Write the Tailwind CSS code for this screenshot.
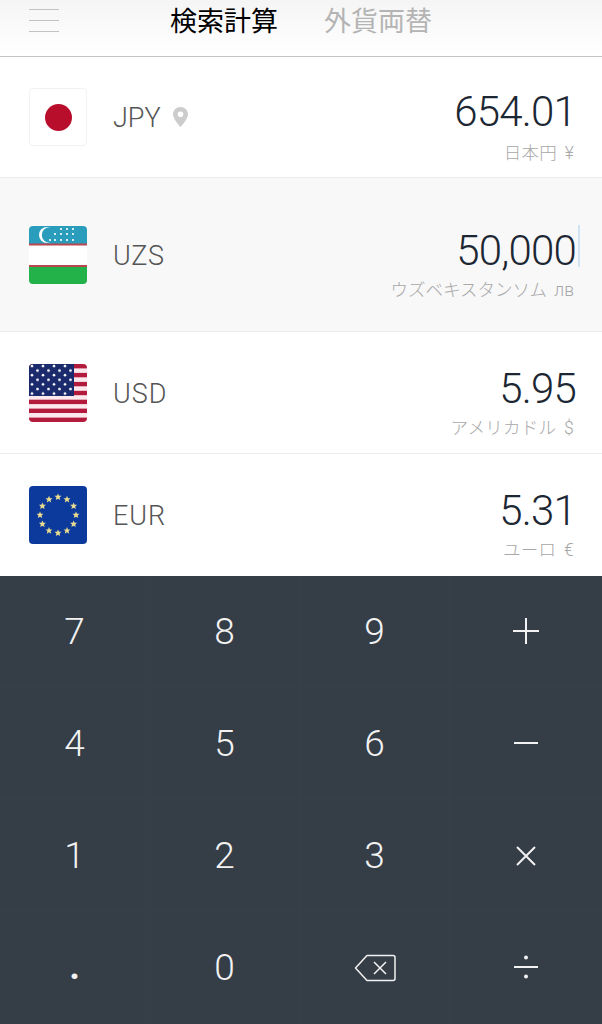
<!DOCTYPE html>
<html lang="ja">
<head>
    <meta charset="utf-8">
    <title>検索計算</title>
    <script src="https://cdn.jsdelivr.net/npm/@tailwindcss/browser@4"></script>
</head>
<body class="w-[602px] h-[1024px] overflow-hidden bg-white font-['Roboto','Noto_Sans_CJK_JP',sans-serif]">

<!-- header -->
<header class="flex items-center h-[57px] pb-[16px] pl-[29px] border-b border-[#c4c4c4] bg-gradient-to-b from-[#f5f5f5] to-white">
    <div class="flex flex-col gap-[10px] w-[30px]">
        <div class="h-px bg-[#c2c2c2]"></div>
        <div class="h-px bg-[#c2c2c2]"></div>
        <div class="h-px bg-[#c2c2c2]"></div>
    </div>
    <nav class="flex gap-[46px] ml-[111px] text-[27px] leading-[36px] font-['Noto_Sans_CJK_JP',sans-serif]">
        <span class="text-black">検索計算</span>
        <span class="text-[#b4b4b4]">外貨両替</span>
    </nav>
</header>

<!-- currency rows -->
<section class="h-[121px] flex items-center pl-[29px] pr-[26px] border-b border-[#ececec]">
    <div class="w-[58px] h-[58px] rounded-[4px] border border-[#f2f2f2] flex items-center justify-center">
        <div class="w-[27px] h-[27px] rounded-full bg-[#b80d2b]"></div>
    </div>
    <span class="ml-[26px] mt-[2px] text-[27px] font-light text-[#555]">JPY</span>
    <svg class="ml-[12px]" width="15" height="20" viewBox="0 0 15 20"><path fill="#cccccc" fill-rule="evenodd" d="M7.500 0C3.400 0 0 3.200 0 7.200 0 12 7.500 20 7.500 20S15 12 15 7.200C15 3.200 11.600 0 7.500 0zm0 10a2.800 2.800 0 1 1 0-5.600a2.800 2.800 0 0 1 0 5.600z"/></svg>
    <div class="ml-auto mt-[20px] text-right">
        <div class="text-[42px] leading-[40px] tracking-[-0.8px] font-light text-[#1c2733]">654.01</div>
        <div class="mt-[11px] pr-[2px] text-[17.5px] leading-[20px] tracking-[0.3px] [word-spacing:3px] font-light text-[#a8a8a8]">日本円 ¥</div>
    </div>
</section>

<section class="h-[154px] flex items-center pl-[29px] pr-[26px] border-b border-[#ececec] bg-[#f8f8f9]">
    <svg class="rounded-[4px]" width="58" height="58" viewBox="0 0 58 58">
        <rect width="58" height="18" fill="#2a9dbd"/>
        <rect y="19.500" width="58" height="20" fill="#ffffff"/>
        <rect y="17.500" width="58" height="2" fill="#b9474f"/>
        <rect y="39" width="58" height="2" fill="#b9474f"/>
        <rect y="41" width="58" height="17" fill="#23b14a"/>
        <circle cx="18" cy="9" r="8" fill="#ffffff"/>
        <circle cx="20.500" cy="9" r="7.700" fill="#2a9dbd"/>
        <g fill="#ffffff">
            <circle cx="32" cy="3" r="1.100"/><circle cx="38" cy="3" r="1.100"/><circle cx="44" cy="3" r="1.100"/>
            <circle cx="26" cy="8" r="1.100"/><circle cx="32" cy="8" r="1.100"/><circle cx="38" cy="8" r="1.100"/><circle cx="44" cy="8" r="1.100"/>
            <circle cx="21" cy="14" r="1.100"/><circle cx="26" cy="14" r="1.100"/><circle cx="32" cy="14" r="1.100"/><circle cx="38" cy="14" r="1.100"/><circle cx="44" cy="14" r="1.100"/>
        </g>
    </svg>
    <span class="ml-[26px] mt-[4px] text-[27px] tracking-[0.6px] font-light text-[#555]">UZS</span>
    <div class="ml-auto mt-[21px] text-right relative">
        <div class="text-[42px] leading-[40px] tracking-[-0.8px] font-light text-[#1c2733]">50,000</div>
        <div class="absolute right-[-4px] top-[-6px] w-[2px] h-[42px] bg-[#cfe6f2]"></div>
        <div class="mt-[9px] pr-[2px] text-[17.5px] leading-[20px] [word-spacing:3px] font-light text-[#a8a8a8]">ウズベキスタンソム лв</div>
    </div>
</section>

<section class="h-[122px] flex items-center pl-[29px] pr-[26px] border-b border-[#ececec]">
    <svg class="rounded-[4px]" width="58" height="58" viewBox="0 0 58 58">
        <defs>
            <pattern id="stars" width="11" height="9.200" patternUnits="userSpaceOnUse">
                <circle cx="3" cy="2" r="1.300" fill="#ffffff"/>
                <circle cx="8.500" cy="6.600" r="1.300" fill="#ffffff"/>
            </pattern>
        </defs>
        <rect width="58" height="58" fill="#fbe9ee"/>
        <g fill="#b31b3c">
            <rect width="58" height="4.400"/><rect y="8.900" width="58" height="4.400"/><rect y="17.900" width="58" height="4.400"/><rect y="26.800" width="58" height="4.400"/><rect y="35.700" width="58" height="4.400"/><rect y="44.600" width="58" height="4.400"/><rect y="53.600" width="58" height="4.400"/>
        </g>
        <rect width="45" height="32" fill="#1a2a6c"/>
        <rect width="45" height="32" fill="url(#stars)"/>
    </svg>
    <span class="ml-[26px] mt-[4px] text-[27px] tracking-[1px] font-light text-[#555]">USD</span>
    <div class="ml-auto mt-[21px] text-right">
        <div class="text-[42px] leading-[40px] tracking-[-0.8px] font-light text-[#1c2733]">5.95</div>
        <div class="mt-[9px] pr-[2px] text-[17.5px] leading-[20px] tracking-[0.3px] [word-spacing:3px] font-light text-[#a8a8a8]">アメリカドル $</div>
    </div>
</section>

<section class="h-[122px] flex items-center pl-[29px] pr-[26px]">
    <svg class="rounded-[4px]" width="58" height="58" viewBox="0 0 58 58">
        <defs>
            <path id="star" fill="#e9dc8e" d="M0-3.600 1-1.200 3.500-1.200 1.600.5 2.200 3.100 0 1.700-2.200 3.100-1.600.5-3.500-1.200-1-1.200Z"/>
        </defs>
        <rect width="58" height="58" fill="#0c3a9c"/>
        <use href="#star" x="29" y="11"/><use href="#star" x="38" y="13.400"/><use href="#star" x="44.600" y="20"/>
        <use href="#star" x="47" y="29"/><use href="#star" x="44.600" y="38"/><use href="#star" x="38" y="44.600"/>
        <use href="#star" x="29" y="47"/><use href="#star" x="20" y="44.600"/><use href="#star" x="13.400" y="38"/>
        <use href="#star" x="11" y="29"/><use href="#star" x="13.400" y="20"/><use href="#star" x="20" y="13.400"/>
    </svg>
    <span class="ml-[26px] mt-[2px] text-[27px] tracking-[1px] font-light text-[#555]">EUR</span>
    <div class="ml-auto mt-[21px] text-right">
        <div class="text-[42px] leading-[40px] tracking-[-0.8px] font-light text-[#1c2733]">5.31</div>
        <div class="mt-[9px] pr-[2px] text-[17.5px] leading-[20px] tracking-[0.3px] [word-spacing:3px] font-light text-[#a8a8a8]">ユーロ €</div>
    </div>
</section>

<!-- keypad -->
<div class="grid grid-cols-[150px_150px_150px_152px] grid-rows-[112px_112px_112px_112px] h-[448px] bg-[#353d47] text-[37px] font-light text-[#f2f2f2]">
    <div class="flex items-center justify-center border-r border-b border-[#373f49]">7</div>
    <div class="flex items-center justify-center border-r border-b border-[#373f49]">8</div>
    <div class="flex items-center justify-center border-r border-b border-[#373f49]">9</div>
    <div class="flex items-center justify-center border-b border-[#373f49]">
        <svg class="mb-[2px]" width="26" height="26" viewBox="0 0 26 26"><path stroke="#f2f2f2" stroke-width="2" d="M0 13H26M13 0V26"/></svg>
    </div>
    <div class="flex items-center justify-center border-r border-b border-[#373f49]">4</div>
    <div class="flex items-center justify-center border-r border-b border-[#373f49]">5</div>
    <div class="flex items-center justify-center border-r border-b border-[#373f49]">6</div>
    <div class="flex items-center justify-center border-b border-[#373f49]">
        <svg width="26" height="26" viewBox="0 0 26 26"><path stroke="#f2f2f2" stroke-width="2" d="M1 12H25"/></svg>
    </div>
    <div class="flex items-center justify-center border-r border-b border-[#373f49]">1</div>
    <div class="flex items-center justify-center border-r border-b border-[#373f49]">2</div>
    <div class="flex items-center justify-center border-r border-b border-[#373f49]">3</div>
    <div class="flex items-center justify-center border-b border-[#373f49]">
        <svg width="26" height="26" viewBox="0 0 26 26"><path stroke="#f2f2f2" stroke-width="2" d="M4 4 22 22M22 4 4 22"/></svg>
    </div>
    <div class="flex items-center justify-center border-r border-[#373f49] font-bold pb-[3px]">.</div>
    <div class="flex items-center justify-center border-r border-[#373f49]">0</div>
    <div class="flex items-center justify-center border-r border-[#373f49]">
        <svg width="42" height="28" viewBox="0 0 42 28"><path fill="none" stroke="#f2f2f2" stroke-width="1.500" stroke-linejoin="round" d="M1.500 14 13 1.500H39A2 2 0 0 1 41 3.500V24.500A2 2 0 0 1 39 26.500H13Z M20 8 32 20M32 8 20 20"/></svg>
    </div>
    <div class="flex items-center justify-center">
        <svg class="mb-[2px]" width="26" height="26" viewBox="0 0 26 26"><path stroke="#f2f2f2" stroke-width="2" d="M1 13H25"/><circle cx="13" cy="3.500" r="2" fill="#f2f2f2"/><circle cx="13" cy="22.500" r="2" fill="#f2f2f2"/></svg>
    </div>
</div>

</body>
</html>
